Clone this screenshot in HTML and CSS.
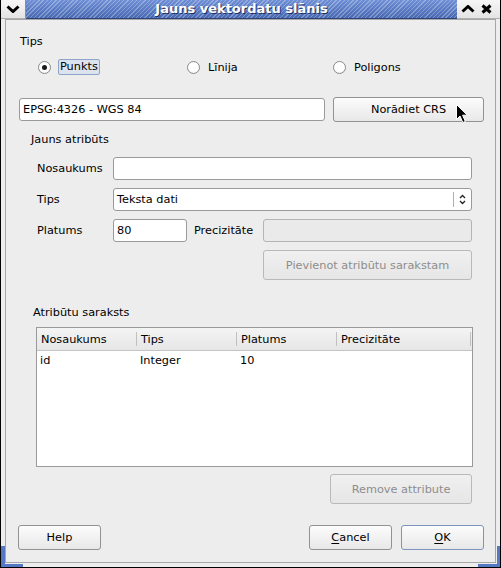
FILE: index.html
```html
<!DOCTYPE html>
<html lang="lv">
<head>
    <meta charset="UTF-8">
    <title>Jauns vektordatu slānis</title>
    <link rel="stylesheet" href="styles.css">
</head>
<body>
    <div class="window">
        <div class="titlebar">
            <div class="tb-btn tb-menu">
                <svg width="14" height="8" viewBox="0 0 14 8"><polyline points="1.5,1.5 7,6.5 12.5,1.5" fill="none" stroke="#000" stroke-width="3"/></svg>
            </div>
            <div class="tb-title"><span>Jauns vektordatu slānis</span></div>
            <div class="tb-btn tb-shade">
                <svg width="14" height="8" viewBox="0 0 14 8"><polyline points="1.5,6.5 7,1.5 12.5,6.5" fill="none" stroke="#000" stroke-width="3"/></svg>
            </div>
            <div class="tb-btn tb-close">
                <svg width="11" height="10" viewBox="0 0 11 10"><path d="M1.5,1.5 L9.5,8.5 M9.5,1.5 L1.5,8.5" stroke="#000" stroke-width="3"/></svg>
            </div>
        </div>

        <div class="frame">
            <div class="dialog">
                <div class="section-title type-title">Tips</div>

                <div class="radios">
                    <label class="radio">
                        <span class="radio-dot checked"></span>
                        <span class="radio-text focused">Punkts</span>
                    </label>
                    <label class="radio">
                        <span class="radio-dot"></span>
                        <span class="radio-text">Līnija</span>
                    </label>
                    <label class="radio">
                        <span class="radio-dot"></span>
                        <span class="radio-text">Poligons</span>
                    </label>
                </div>

                <div class="crs-row">
                    <div class="field crs-field">EPSG:4326 - WGS 84</div>
                    <div class="button crs-btn">Norādiet CRS</div>
                </div>

                <div class="attr-group">
                    <div class="section-title group-title">Jauns atribūts</div>

                    <div class="form-row name-row">
                        <span class="label">Nosaukums</span>
                        <div class="field"></div>
                    </div>

                    <div class="form-row type-row">
                        <span class="label">Tips</span>
                        <div class="field combo">
                            <span class="combo-text">Teksta dati</span>
                            <span class="combo-arrows">
                                <svg width="7" height="11" viewBox="0 0 7 11"><polyline points="1,4 3.5,1.5 6,4" fill="none" stroke="#222" stroke-width="1.3"/><polyline points="1,7 3.5,9.5 6,7" fill="none" stroke="#222" stroke-width="1.3"/></svg>
                            </span>
                        </div>
                    </div>

                    <div class="form-row width-row">
                        <span class="label">Platums</span>
                        <div class="field">80</div>
                        <span class="label prec-label">Precizitāte</span>
                        <div class="field disabled"></div>
                    </div>

                    <div class="add-row">
                        <div class="button disabled add-btn">Pievienot atribūtu sarakstam</div>
                    </div>
                </div>

                <div class="list-group">
                    <div class="section-title list-title">Atribūtu saraksts</div>

                    <div class="attr-table">
                        <div class="thead">
                            <div class="th">Nosaukums</div>
                            <div class="th">Tips</div>
                            <div class="th">Platums</div>
                            <div class="th">Precizitāte</div>
                        </div>
                        <div class="tr">
                            <div class="td">id</div>
                            <div class="td">Integer</div>
                            <div class="td">10</div>
                            <div class="td"></div>
                        </div>
                    </div>

                    <div class="remove-row">
                        <div class="button disabled remove-btn">Remove attribute</div>
                    </div>
                </div>

                <div class="dialog-buttons">
                    <div class="button">Help</div>
                    <div class="spacer"></div>
                    <div class="button"><u>C</u>ancel</div>
                    <div class="button default"><u>O</u>K</div>
                </div>
            </div>

            <!-- resize handles in the frame corners -->
            <span class="corner corner-left"></span>
            <span class="corner corner-right"></span>
        </div>

        <!-- mouse pointer resting on the CRS button -->
        <svg class="pointer" width="13" height="20" viewBox="0 0 13 20">
            <path d="M0.5,0.5 L0.5,15.5 L4,12 L6.8,18.5 L9.3,17.4 L6.6,11.2 L11.3,11.2 Z" fill="#000" stroke="#fff" stroke-width="1"/>
        </svg>
    </div>
</body>
</html>
```

FILE: styles.css
```css
* {
    box-sizing: border-box;
    margin: 0;
    padding: 0;
}

body {
    font-family: "DejaVu Sans", "Liberation Sans", sans-serif;
    font-size: 11.3px;
    color: #000;
    background: #ededed;
}

.window {
    position: relative;
    width: 501px;
    height: 568px;
    display: flex;
    flex-direction: column;
    background: #ededed;
    border: 1px solid #000;
    border-top: none;
}

/* title bar */

.titlebar {
    height: 19px;
    display: flex;
    flex-shrink: 0;
}

.tb-btn {
    width: 21px;
    display: flex;
    align-items: center;
    justify-content: center;
    background: linear-gradient(#f6f6f6, #e4e4e4);
    border-bottom: 1px solid #b0b0b0;
}

.tb-menu {
    width: 25px;
    border-top-left-radius: 4px;
    border-right: 1px solid #7a8fb8;
}

.tb-close {
    width: 22px;
    padding-right: 5px;
}

.tb-title {
    flex: 1;
    display: flex;
    align-items: center;
    justify-content: center;
    background:
        repeating-linear-gradient(135deg, rgba(255, 255, 255, 0.28) 0 1px, transparent 1px 3px),
        linear-gradient(#6f8fd6, #4868b2);
    border-bottom: 1px solid #2e4478;
}

.tb-title span {
    color: #fff;
    font-weight: bold;
    font-size: 13px;
    text-shadow: 1px 1px 0 #203060;
    margin-top: -1px;
}

/* frame around the dialog */

.frame {
    flex: 1;
    position: relative;
    padding: 0 4px 4px;
    display: flex;
}

.dialog {
    flex: 1;
    border: 1px solid #a6a6a6;
    padding: 0 11px 0 13px;
    display: flex;
    flex-direction: column;
}

.corner {
    position: absolute;
    bottom: 0;
    width: 22px;
    height: 21px;
    border-bottom: 3px solid #5677c4;
}

.corner-left {
    left: 0;
    border-left: 4px solid #5677c4;
}

.corner-right {
    right: 0;
    border-right: 3px solid #5677c4;
}

.pointer {
    position: absolute;
    left: 455px;
    top: 104px;
}

/* common widgets */

.section-title {
    height: 15px;
    line-height: 15px;
}

.field {
    height: 23px;
    background: #fff;
    border: 1px solid #9a9a9a;
    border-radius: 3px;
    padding: 0 3px;
    line-height: 21px;
    white-space: nowrap;
    overflow: hidden;
}

.field.disabled {
    background: #eaeaea;
    border-color: #b4b4b4;
}

.button {
    height: 25px;
    display: flex;
    align-items: center;
    justify-content: center;
    border: 1px solid #929292;
    border-radius: 3px;
    background: linear-gradient(#fcfcfc, #e8e8e8);
    white-space: nowrap;
}

.button.disabled {
    color: #8d8d8d;
    border-color: #b9b9b9;
    background: linear-gradient(#f0f0f0, #e6e6e6);
}

.button.default {
    border-color: #7d95bd;
}

.button u {
    text-decoration: underline;
    text-underline-offset: 2px;
}

/* geometry type */

.type-title {
    margin-top: 14px;
    padding-left: 1px;
}

.radios {
    margin-top: 9px;
    height: 18px;
    display: grid;
    grid-template-columns: 149px 146px auto;
    align-items: center;
    padding-left: 19px;
}

.radio {
    display: flex;
    align-items: center;
    gap: 8px;
}

.radio-dot {
    width: 13px;
    height: 13px;
    border-radius: 50%;
    border: 1px solid #8a8a8a;
    background: radial-gradient(circle at 50% 35%, #fff 55%, #e6e6e6);
    display: flex;
    align-items: center;
    justify-content: center;
}

.radio-dot.checked::after {
    content: "";
    width: 5px;
    height: 5px;
    border-radius: 50%;
    background: #1a1a1a;
}

.radio-text.focused {
    margin-left: -1px;
    padding: 0 1px;
    height: 16px;
    line-height: 14px;
    background: #dce3ee;
    border: 1px solid #8ea4c8;
    border-radius: 2px;
}

/* CRS */

.crs-row {
    margin-top: 21px;
    height: 25px;
    display: flex;
    align-items: center;
    gap: 8px;
}

.crs-field {
    width: 306px;
}

.crs-btn {
    flex: 1;
}

/* new attribute */

.attr-group {
    padding: 0 12px 0 17px;
}

.group-title {
    margin-top: 10px;
    margin-left: -5px;
    height: 16px;
    line-height: 16px;
}

.form-row {
    display: grid;
    grid-template-columns: 77px 1fr;
    align-items: center;
    height: 23px;
    margin-top: 8px;
}

.name-row {
    margin-top: 9px;
}

.width-row {
    grid-template-columns: 77px 74px 76px 1fr;
}

.label {
    padding-left: 1px;
}

.prec-label {
    padding-left: 7px;
}

.combo {
    display: flex;
    align-items: center;
    padding-right: 0;
}

.combo-text {
    flex: 1;
}

.combo-arrows {
    width: 18px;
    height: 15px;
    border-left: 1px solid #b0b0b0;
    display: flex;
    align-items: center;
    justify-content: center;
}

.add-row {
    margin-top: 8px;
    display: flex;
    justify-content: flex-end;
}

.add-btn {
    width: 209px;
    height: 30px;
}

/* attribute list */

.list-group {
    padding: 0 11px 0 17px;
}

.list-title {
    margin-top: 25px;
    margin-left: -3px;
}

.attr-table {
    margin-top: 7px;
    height: 140px;
    background: #fff;
    border: 1px solid #9a9a9a;
}

.thead,
.tr {
    display: grid;
    grid-template-columns: 100px 100px 100px 1fr;
}

.thead {
    height: 23px;
    background: linear-gradient(#f4f4f4, #e6e6e6);
    border-bottom: 1px solid #c4c4c4;
}

.th {
    display: flex;
    align-items: center;
    padding-left: 4px;
    position: relative;
}

.th::after {
    content: "";
    position: absolute;
    right: 0;
    top: 4px;
    bottom: 4px;
    width: 1px;
    background: #c0c0c0;
}

.th:last-child::after {
    right: 1px;
}

.tr {
    height: 19px;
    align-items: center;
}

.td {
    padding-left: 3px;
}

.remove-row {
    margin-top: 7px;
    margin-right: 1px;
    display: flex;
    justify-content: flex-end;
}

.remove-btn {
    width: 142px;
    height: 30px;
}

/* dialog buttons */

.dialog-buttons {
    margin-top: 21px;
    margin-left: -1px;
    display: flex;
    gap: 9px;
}

.dialog-buttons .button {
    width: 83px;
}

.spacer {
    flex: 1;
}
```
